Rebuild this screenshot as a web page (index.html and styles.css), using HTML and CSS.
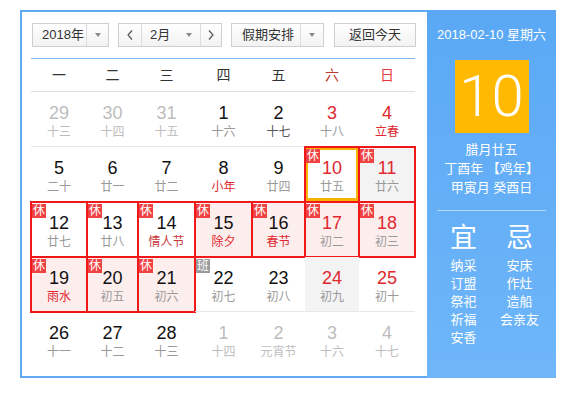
FILE: index.html
```html
<!DOCTYPE html>
<html lang="zh-CN">
<head>
<meta charset="utf-8">
<title>万年历</title>
<link rel="stylesheet" href="styles.css">
</head>
<body>
<div class="frame">
  <div class="main">
    <div class="toolbar">
      <div class="sel year"><span class="sel-text">2018年</span><span class="sel-arrow"><i class="tri"></i></span></div>
      <div class="sel month">
        <span class="nav"><svg width="6" height="10" viewBox="0 0 6 10"><polyline points="5,0.5 1,5 5,9.5" fill="none" stroke="#555" stroke-width="1.2"/></svg></span>
        <span class="month-mid"><span class="sel-text">2月</span><i class="tri"></i></span>
        <span class="nav"><svg width="6" height="10" viewBox="0 0 6 10"><polyline points="1,0.5 5,5 1,9.5" fill="none" stroke="#555" stroke-width="1.2"/></svg></span>
      </div>
      <div class="sel holiday"><span class="sel-text">假期安排</span><span class="sel-arrow"><i class="tri"></i></span></div>
      <div class="btn today">返回今天</div>
    </div>

    <div class="week">
      <span>一</span><span>二</span><span>三</span><span>四</span><span>五</span><span class="sat">六</span><span class="sun">日</span>
    </div>

    <div class="days">
      <div class="c muted"><b>29</b><em>十三</em></div>
      <div class="c muted"><b>30</b><em>十四</em></div>
      <div class="c muted"><b>31</b><em>十五</em></div>
      <div class="c"><b>1</b><em>十六</em></div>
      <div class="c"><b>2</b><em class="dark">十七</em></div>
      <div class="c red"><b>3</b><em>十八</em></div>
      <div class="c red"><b>4</b><em class="fest">立春</em></div>

      <div class="c"><b>5</b><em>二十</em></div>
      <div class="c"><b>6</b><em>廿一</em></div>
      <div class="c"><b>7</b><em>廿二</em></div>
      <div class="c"><b>8</b><em class="fest">小年</em></div>
      <div class="c"><b>9</b><em>廿四</em></div>
      <div class="c red hol cur"><span class="badge">休</span><b>10</b><em>廿五</em></div>
      <div class="c red hol gray"><span class="badge">休</span><b>11</b><em>廿六</em></div>

      <div class="c hol"><span class="badge">休</span><b>12</b><em>廿七</em></div>
      <div class="c hol"><span class="badge">休</span><b>13</b><em>廿八</em></div>
      <div class="c hol"><span class="badge">休</span><b>14</b><em class="fest dim">情人节</em></div>
      <div class="c hol pink"><span class="badge">休</span><b>15</b><em class="fest">除夕</em></div>
      <div class="c hol pink"><span class="badge">休</span><b>16</b><em class="fest">春节</em></div>
      <div class="c red hol pink"><span class="badge">休</span><b>17</b><em>初二</em></div>
      <div class="c red hol pink"><span class="badge">休</span><b>18</b><em>初三</em></div>

      <div class="c hol pink"><span class="badge">休</span><b>19</b><em class="fest">雨水</em></div>
      <div class="c hol pink"><span class="badge">休</span><b>20</b><em>初五</em></div>
      <div class="c hol pink"><span class="badge">休</span><b>21</b><em>初六</em></div>
      <div class="c"><span class="badge work">班</span><b>22</b><em>初七</em></div>
      <div class="c"><b>23</b><em>初八</em></div>
      <div class="c red gray"><b>24</b><em>初九</em></div>
      <div class="c red"><b>25</b><em>初十</em></div>

      <div class="c last"><b>26</b><em>十一</em></div>
      <div class="c last"><b>27</b><em>十二</em></div>
      <div class="c last"><b>28</b><em>十三</em></div>
      <div class="c last muted"><b>1</b><em>十四</em></div>
      <div class="c last muted"><b>2</b><em>元宵节</em></div>
      <div class="c last muted"><b>3</b><em>十六</em></div>
      <div class="c last muted"><b>4</b><em>十七</em></div>
    </div>
  </div>

  <div class="side">
    <div class="side-date">2018-02-10 星期六</div>
    <div class="big-day">10</div>
    <div class="lunar">
      <div>腊月廿五</div>
      <div>丁酉年 【鸡年】</div>
      <div>甲寅月 癸酉日</div>
    </div>
    <div class="divider"></div>
    <div class="yiji">
      <div class="col">
        <div class="head">宜</div>
        <div>纳采</div><div>订盟</div><div>祭祀</div><div>祈福</div><div>安香</div>
      </div>
      <div class="col">
        <div class="head">忌</div>
        <div>安床</div><div>作灶</div><div>造船</div><div>会亲友</div>
      </div>
    </div>
  </div>
</div>
</body>
</html>
```

FILE: styles.css
```css
* { box-sizing: border-box; margin: 0; padding: 0; }

body {
  background: #fff;
  font-family: "Liberation Sans", "Noto Sans CJK SC", sans-serif;
  color: #333;
}

.frame {
  display: flex;
  width: 536px;
  height: 368px;
  margin: 10px 0 0 20px;
}

.main {
  width: 407px;
  height: 368px;
  background: #fff;
  border: 2px solid #5ea9f1;
  border-right: 0;
  padding: 11px 0 0 9px;
}

/* toolbar */
.toolbar {
  display: flex;
  height: 24px;
  margin-left: 1px;
  font-size: 13px;
  color: #333;
}

.sel, .btn {
  display: flex;
  align-items: stretch;
  border: 1px solid #cfcfcf;
  background: linear-gradient(#ffffff, #f2f2f2);
  line-height: 22px;
}

.sel-text { flex: 1; white-space: nowrap; }

.sel-arrow {
  display: flex;
  align-items: center;
  justify-content: center;
  border-left: 1px solid #dcdcdc;
}

.tri {
  display: block;
  width: 0;
  height: 0;
  border-left: 3.5px solid transparent;
  border-right: 3.5px solid transparent;
  border-top: 4px solid #8a8a8a;
}

.year { width: 77px; }
.year .sel-text { padding-left: 9px; }
.year .sel-arrow { width: 22px; }

.month { width: 104px; margin-left: 9px; }
.nav {
  display: flex;
  align-items: center;
  justify-content: center;
  width: 23px;
}
.nav:first-child { border-right: 1px solid #dcdcdc; }
.nav:last-child { border-left: 1px solid #dcdcdc; width: 21px; }
.month-mid {
  flex: 1;
  display: flex;
  align-items: center;
  padding: 0 8px 0 8px;
}

.holiday { width: 93px; margin-left: 9px; }
.holiday .sel-text { padding-left: 10px; }
.holiday .sel-arrow { width: 23px; }

.today {
  width: 82px;
  margin-left: 10px;
  justify-content: center;
}

/* week header */
.week, .days {
  display: grid;
  grid-template-columns: 56px 51px 57px 57px 53px 54px 56px;
  width: 384px;
}

.week {
  margin-top: 11px;
  height: 34px;
  border-top: 1px solid #7db9ef;
  border-bottom: 1px solid #dedede;
  font-size: 14px;
  line-height: 32px;
  text-align: center;
  color: #333;
}
.week .sat { color: #c0392b; }
.week .sun { color: #e8383d; }

/* days */
.c {
  position: relative;
  height: 55px;
  padding-top: 11px;
  border-bottom: 1px solid #e8e8e8;
  text-align: center;
}
.c.last { border-bottom: 0; }

.c b {
  display: block;
  font-weight: normal;
  font-size: 18px;
  line-height: 20px;
  color: #111;
}
.c em {
  display: block;
  font-style: normal;
  font-size: 12px;
  line-height: 16px;
  margin-top: 1px;
  color: #999;
}
.c em.dark { color: #555; }

.c.red b { color: #e0282e; }
.c em.fest { color: #e0282e; }
.c em.fest.dim { color: #c9383a; }

.c.muted b, .c.muted em { color: #bdbdbd; }

.c.pink { background: #fdeeee; }
.c.gray { background: #f3f3f3; }

.c.hol {
  outline: 2px solid #f01818;
  outline-offset: -1px;
}
.c.cur {
  background: #fff;
  box-shadow: inset 0 0 0 3px #f5b400;
}

.badge {
  position: absolute;
  left: 1px;
  top: 2px;
  width: 14px;
  height: 14px;
  background: #ef4343;
  color: #fff;
  font-size: 12px;
  line-height: 14px;
  text-align: center;
}
.badge.work { background: #9a9a9a; }

/* side panel */
.side {
  width: 129px;
  height: 368px;
  background: linear-gradient(#5aa8f5, #6fb6f9);
  color: #fff;
  padding-top: 16px;
  text-align: center;
}

.side-date {
  font-size: 13px;
  line-height: 18px;
}

.big-day {
  width: 74px;
  height: 73px;
  margin: 16px auto 0;
  background: #ffb900;
  font-family: Roboto, "Liberation Sans", sans-serif;
  font-weight: 300;
  font-size: 58px;
  line-height: 73px;
  color: #fff;
}

.lunar {
  margin-top: 7px;
  font-size: 13px;
  line-height: 19px;
}

.divider {
  margin: 13px 10px 0;
  border-top: 1px solid rgba(255, 255, 255, 0.5);
}

.yiji {
  display: grid;
  grid-template-columns: 56px 56px;
  justify-content: center;
  margin-top: 12px;
  font-size: 13px;
  line-height: 18px;
}

.yiji .head {
  font-size: 27px;
  line-height: 30px;
  margin-bottom: 4px;
}
```
